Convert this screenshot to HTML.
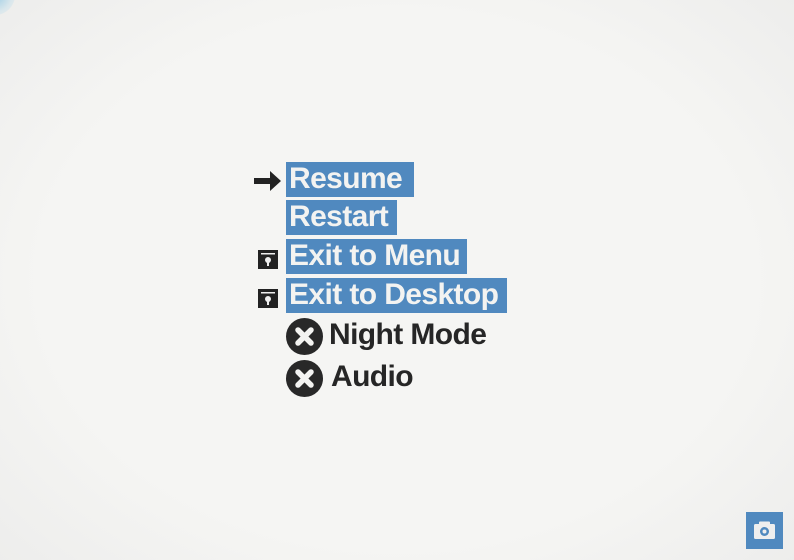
<!DOCTYPE html>
<html><head><meta charset="utf-8"><style>
html,body{margin:0;padding:0}
body{width:794px;height:560px;overflow:hidden;position:relative;background:radial-gradient(ellipse 75% 80% at 50% 50%,#f5f5f3 60%,#ebebea 100%);font-family:"Liberation Sans",sans-serif;font-weight:bold}
.corner{position:absolute;left:-25px;top:-25px;width:40px;height:40px;border-radius:50%;background:radial-gradient(circle,rgba(120,190,225,.7) 0%,rgba(170,215,235,.3) 60%,rgba(240,240,240,0) 100%)}
.b{position:absolute;left:286px;height:35px;background:#5089bf;color:#f3f3f1;font-size:30px;line-height:33px;padding-left:3px;letter-spacing:-0.6px;box-sizing:border-box}
.d{position:absolute;color:#262626;font-size:30px;line-height:36px;letter-spacing:-0.6px}
.c{position:absolute;left:286px;width:37px;height:37px;border-radius:50%;background:#282828}
.cam{position:absolute;left:746px;top:512px;width:37px;height:37px;background:#5089bf}
</style></head><body>
<div class="corner"></div>
<svg style="position:absolute;left:253px;top:168px" width="32" height="26" viewBox="0 0 32 26"><path d="M1 10h16V3l11 10-11 10v-7H1z" fill="#222"/></svg>
<div class="b" style="top:162px;width:128px">Resume</div>
<div class="b" style="top:200px;width:111px">Restart</div>
<div class="b" style="top:239px;width:181px">Exit to Menu</div>
<div class="b" style="top:278px;width:221px">Exit to Desktop</div>
<svg style="position:absolute;left:258px;top:250px" width="20" height="19"><rect width="20" height="19" fill="#222"/><rect x="3" y="3" width="14" height="1.5" fill="#eee"/><circle cx="10" cy="10" r="3" fill="#eee"/><rect x="9" y="11" width="2" height="5" fill="#eee"/></svg>
<svg style="position:absolute;left:258px;top:289px" width="20" height="19"><rect width="20" height="19" fill="#222"/><rect x="3" y="3" width="14" height="1.5" fill="#eee"/><circle cx="10" cy="10" r="3" fill="#eee"/><rect x="9" y="11" width="2" height="5" fill="#eee"/></svg>
<div class="c" style="top:318px"><svg width="37" height="37"><path d="M12 12L25 25M25 12L12 25" stroke="#f3f3f1" stroke-width="5.5" stroke-linecap="round"/></svg></div>
<div class="d" style="left:329px;top:317px">Night Mode</div>
<div class="c" style="top:360px"><svg width="37" height="37"><path d="M12 12L25 25M25 12L12 25" stroke="#f3f3f1" stroke-width="5.5" stroke-linecap="round"/></svg></div>
<div class="d" style="left:331px;top:359px">Audio</div>
<div class="cam"><svg width="37" height="37"><rect x="8" y="12" width="21" height="15" rx="1.5" fill="#eee"/><rect x="13" y="9.5" width="11" height="4" rx="1" fill="#eee"/><circle cx="18.5" cy="19.5" r="4.5" fill="#5089bf"/><circle cx="18.5" cy="19.5" r="2" fill="#eee"/></svg></div>
</body></html>
